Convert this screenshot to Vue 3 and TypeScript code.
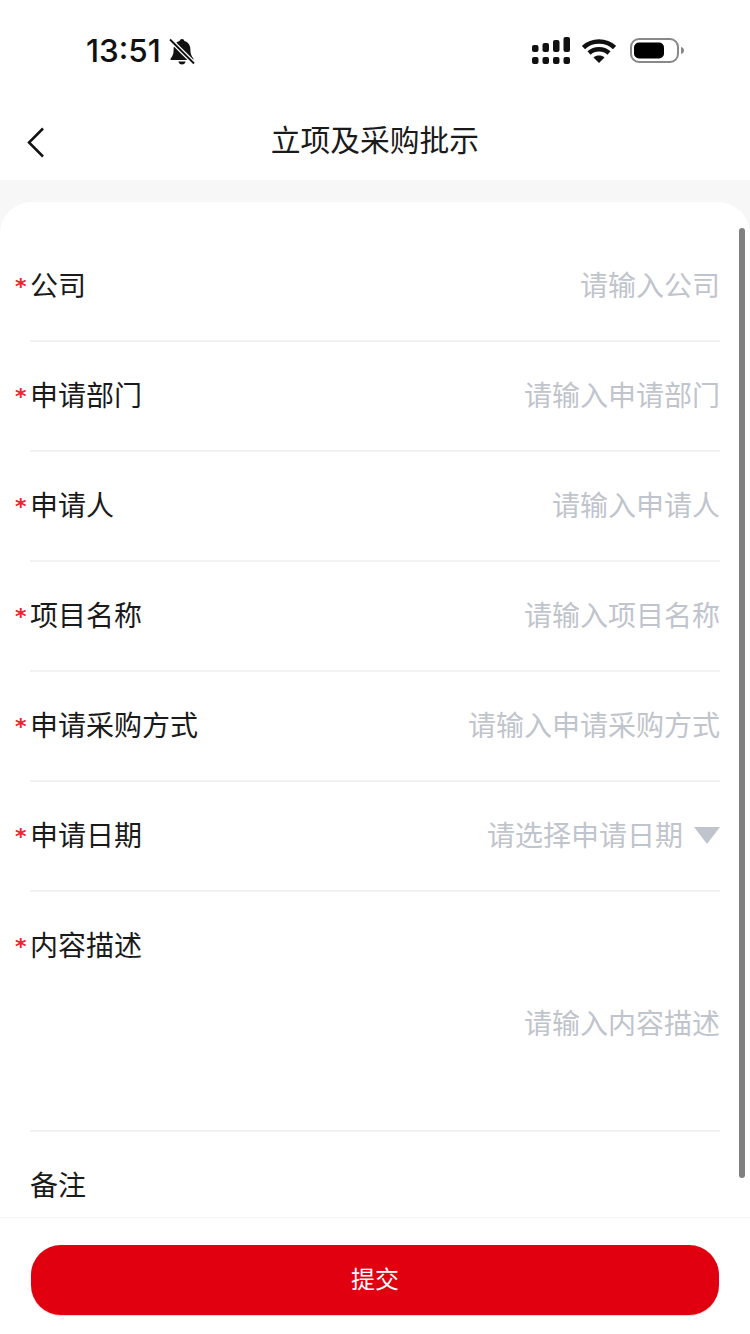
<template>
  <div class="page">
    <header class="status-bar">
      <div class="status-left">
        <span class="time">13:51</span>
        <svg class="bell" width="26" height="28" viewBox="0 0 26 28">
          <path d="M13 1c1.300 0 2.200.9 2.400 2.100C19.600 4.300 21.400 7.600 21.400 12c0 4 1 6 3 8.400V22H1.600v-1.600c2-2.400 3-4.400 3-8.400 0-4.400 1.800-7.700 6-8.900C10.800 1.900 11.700 1 13 1z" fill="#111" />
          <path d="M9.400 23.400h7.200c-.3 1.800-1.800 3-3.600 3s-3.300-1.200-3.600-3z" fill="#111" />
          <path d="M1 1.500l24 24" stroke="#fff" stroke-width="4.500" />
          <path d="M1 1.500l24 24" stroke="#111" stroke-width="1.800" />
        </svg>
      </div>
      <div class="status-right">
        <svg width="38" height="27" viewBox="0 0 38 27">
          <g fill="#111">
            <rect x="0" y="8" width="6.500" height="7" rx="2" />
            <rect x="10.500" y="6" width="6.500" height="9" rx="2" />
            <rect x="21" y="3" width="6.500" height="12" rx="2" />
            <rect x="31.500" y="0" width="6.500" height="15" rx="2" />
            <rect x="0" y="20" width="6.500" height="7" rx="2" />
            <rect x="10.500" y="20" width="6.500" height="7" rx="2" />
            <rect x="21" y="20" width="6.500" height="7" rx="2" />
            <rect x="31.500" y="20" width="6.500" height="7" rx="2" />
          </g>
        </svg>
        <svg class="wifi" width="34" height="24" viewBox="0 0 34 24">
          <g fill="none" stroke="#111" stroke-width="4.500">
            <path d="M1.500 8.500C10 .5 24 .5 32.500 8.500" />
            <path d="M7 14c5.500-5 14.500-5 20 0" />
          </g>
          <path d="M11.500 18.500c3-2.600 8-2.600 11 0L17 24z" fill="#111" />
        </svg>
        <svg class="battery" width="55" height="25" viewBox="0 0 55 25">
          <rect x="1" y="1" width="47" height="23" rx="8" fill="none" stroke="#888" stroke-width="2" />
          <rect x="4" y="4.500" width="30" height="16" rx="5" fill="#000" />
          <path d="M51 9c2 .3 3 1.700 3 3.500S53 15.700 51 16z" fill="#888" />
        </svg>
      </div>
    </header>

    <nav class="nav-bar">
      <svg class="back" width="18" height="31" viewBox="0 0 18 31">
        <path d="M16 1.500L2 15.500l14 14" fill="none" stroke="#111" stroke-width="2.500" />
      </svg>
      <h1 class="title">立项及采购批示</h1>
    </nav>

    <main class="content">
      <div class="card">
        <div
          v-for="field in fields"
          :key="field.label"
          class="row"
          :class="{ tall: field.tall, last: field.last }"
        >
          <div class="label-line">
            <span class="label">
              <span v-if="field.required" class="star">*</span>{{ field.label }}
            </span>
            <span v-if="!field.tall && field.placeholder" class="placeholder">
              {{ field.placeholder }}
              <i v-if="field.select" class="caret"></i>
            </span>
          </div>
          <div v-if="field.tall" class="area-placeholder">{{ field.placeholder }}</div>
        </div>
      </div>
      <div class="scrollbar"></div>
    </main>

    <footer class="footer">
      <button class="submit" type="button">提交</button>
    </footer>
  </div>
</template>

<script setup lang="ts">
interface Field {
  label: string
  placeholder?: string
  required?: boolean
  select?: boolean
  tall?: boolean
  last?: boolean
}

const fields: Field[] = [
  { label: '公司', placeholder: '请输入公司', required: true },
  { label: '申请部门', placeholder: '请输入申请部门', required: true },
  { label: '申请人', placeholder: '请输入申请人', required: true },
  { label: '项目名称', placeholder: '请输入项目名称', required: true },
  { label: '申请采购方式', placeholder: '请输入申请采购方式', required: true },
  { label: '申请日期', placeholder: '请选择申请日期', required: true, select: true },
  { label: '内容描述', placeholder: '请输入内容描述', required: true, tall: true },
  { label: '备注', last: true },
]
</script>

<style>
html,
body {
  margin: 0;
  background: #fff;
}
</style>

<style scoped>
.page {
  width: 750px;
  height: 1334px;
  display: flex;
  flex-direction: column;
  overflow: hidden;
  background: #f7f7f7;
  font-family: "Noto Sans CJK SC", "Liberation Sans", sans-serif;
  color: #1a1a1a;
}

.status-bar {
  height: 102px;
  flex: none;
  box-sizing: border-box;
  padding: 37px 65px 0 86px;
  display: flex;
  align-items: flex-start;
  justify-content: space-between;
  background: #fff;
}

.status-left {
  display: flex;
  align-items: center;
  gap: 8px;
  height: 28px;
}

.time {
  font-family: Inter, "Liberation Sans", sans-serif;
  font-size: 31.500px;
  font-weight: 500;
  line-height: 28px;
  color: #111;
}

.bell {
  margin-top: 2px;
}

.status-right {
  display: flex;
  align-items: flex-start;
  gap: 12px;
}

.wifi {
  margin-top: 2px;
}

.battery {
  margin-left: 2px;
  margin-top: 1px;
}

.nav-bar {
  height: 78px;
  flex: none;
  box-sizing: border-box;
  padding-bottom: 6px;
  display: flex;
  align-items: center;
  justify-content: center;
  position: relative;
  background: #fff;
}

.back {
  position: absolute;
  left: 27px;
  top: 25px;
}

.title {
  margin: 0;
  font-size: 29.750px;
  font-weight: 400;
  line-height: 40px;
  color: #1a1a1a;
}

.content {
  flex: 1;
  min-height: 0;
  padding-top: 22px;
  position: relative;
}

.card {
  height: 100%;
  box-sizing: border-box;
  padding: 30px 30px 0;
  overflow: hidden;
  background: #fff;
  border-radius: 32px 32px 0 0;
}

.row {
  height: 110px;
  box-sizing: border-box;
  border-bottom: 2px solid #f2f2f2;
}

.row.tall {
  height: 240px;
}

.row.last {
  border-bottom: none;
}

.label-line {
  height: 108px;
  box-sizing: border-box;
  padding-bottom: 5px;
  display: flex;
  align-items: center;
  justify-content: space-between;
}

.label {
  position: relative;
  font-size: 28px;
  line-height: 40px;
  white-space: nowrap;
}

.star {
  position: absolute;
  left: -15px;
  top: 3px;
  font-family: "DejaVu Sans", sans-serif;
  font-size: 22px;
  font-weight: 700;
  line-height: 40px;
  color: #f0222c;
}

.placeholder {
  display: flex;
  align-items: center;
  gap: 11px;
  font-size: 28px;
  line-height: 40px;
  color: #c0c4cc;
  white-space: nowrap;
}

.caret {
  width: 0;
  height: 0;
  margin-top: 4px;
  border-left: 13px solid transparent;
  border-right: 13px solid transparent;
  border-top: 17px solid #c0c4cc;
}

.area-placeholder {
  margin-top: 2px;
  text-align: right;
  font-size: 28px;
  line-height: 40px;
  color: #c0c4cc;
}

.scrollbar {
  position: absolute;
  right: 5px;
  top: 48px;
  width: 6px;
  height: 950px;
  border-radius: 3px;
  background: #808080;
}

.footer {
  height: 117px;
  flex: none;
  box-sizing: border-box;
  padding: 27px 31px 0;
  background: #fff;
  border-top: 1px solid #f5f5f5;
}

.submit {
  display: block;
  width: 688px;
  height: 70px;
  padding: 0 0 5px;
  border: none;
  border-radius: 30px;
  background: #e0000f;
  box-shadow: 0 1px 1px rgba(224, 0, 15, 0.2);
  color: #fff;
  font-family: inherit;
  font-size: 24px;
}
</style>
